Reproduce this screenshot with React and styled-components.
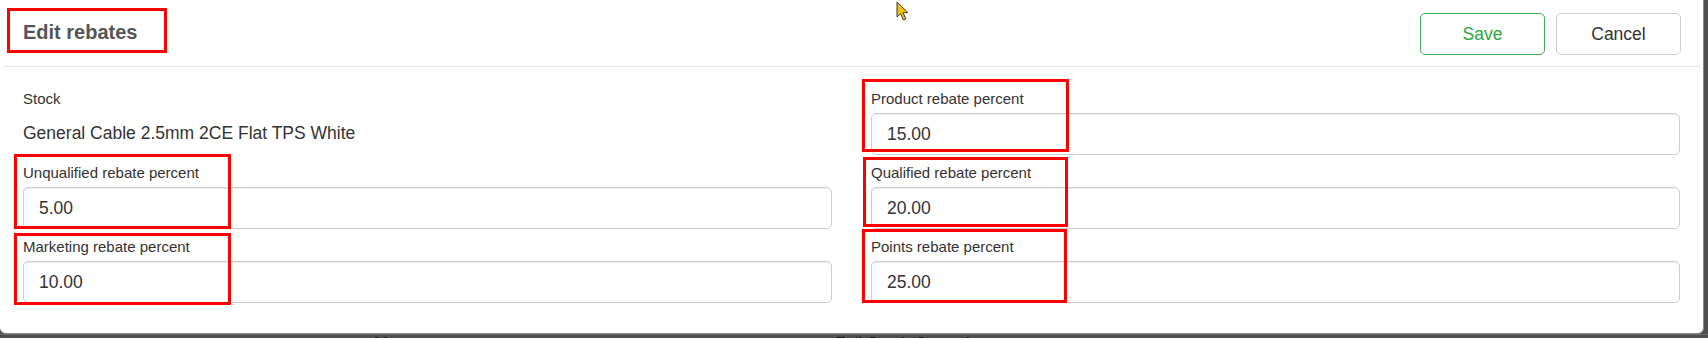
import React from "react";
import styled, { createGlobalStyle } from "styled-components";

const Global = createGlobalStyle`
  html, body {
    margin: 0;
    padding: 0;
    width: 1708px;
    height: 338px;
    overflow: hidden;
    background: #4f4f4f;
    font-family: "Liberation Sans", Arial, Helvetica, sans-serif;
  }
  * { box-sizing: border-box; }
`;

const Page = styled.div`
  position: relative;
  width: 1708px;
  height: 338px;
`;

const Modal = styled.div`
  position: relative;
  width: 1704px;
  height: 334px;
  background: #fff;
  border-right: 1px solid #8a8a8a;
  border-bottom: 1px solid #8a8a8a;
  border-radius: 0 0 6px 6px;
`;

const Header = styled.div`
  display: flex;
  justify-content: space-between;
  align-items: flex-start;
  height: 66px;
  padding: 13px 22px 0 23px;
`;

const Title = styled.h4`
  margin: 8px 0 0 0;
  font-size: 20px;
  line-height: 22px;
  font-weight: 700;
  color: #555;
`;

const Actions = styled.div`
  display: flex;
  gap: 11px;
`;

const Button = styled.button`
  min-width: 125px;
  height: 42px;
  padding: 0 15px;
  font-family: inherit;
  font-size: 17.5px;
  background: #fff;
  border-radius: 5px;
  cursor: pointer;
  color: ${(p) => (p.$variant === "success" ? "#2aa841" : "#333")};
  border: 1px solid ${(p) => (p.$variant === "success" ? "#3fae54" : "#cfcfcf")};
`;

const Divider = styled.hr`
  margin: 0 3px;
  border: 0;
  border-top: 1px solid #e5e5e5;
`;

const Body = styled.div`
  display: grid;
  grid-template-columns: 809px 809px;
  column-gap: 39px;
  row-gap: 7px;
  padding: 21px 24px 0 23px;
`;

const Field = styled.div`
  display: flex;
  flex-direction: column;
`;

const Label = styled.label`
  font-size: 15px;
  line-height: 21px;
  color: #333;
  margin-bottom: 4px;
`;

const StaticValue = styled.div`
  margin-top: 8px;
  font-size: 17.5px;
  line-height: 25px;
  color: #333;
`;

const Input = styled.input`
  width: 100%;
  height: 42px;
  padding: 0 15px;
  font-family: inherit;
  font-size: 17.5px;
  color: #333;
  background: #fff;
  border: 1px solid #cccccc;
  border-radius: 5px;
  box-shadow: inset 0 1px 1px rgba(0, 0, 0, 0.075);
  outline: none;
`;

const Mark = styled.div`
  position: absolute;
  left: ${(p) => p.$x}px;
  top: ${(p) => p.$y}px;
  width: ${(p) => p.$w}px;
  height: ${(p) => p.$h}px;
  border: 3px solid #ff0000;
  pointer-events: none;
`;

const Cursor = styled.svg`
  position: absolute;
  left: 896px;
  top: 1px;
`;

const Backdrop = styled.div`
  display: grid;
  grid-template-columns: 374px 461px 1fr;
  height: 4px;
  overflow: hidden;
  border-top: 1px solid #6a6a6a;
`;

const BackdropCell = styled.div`
  font-size: 17px;
  line-height: 20px;
  margin-top: -1px;
  color: #111;
  white-space: nowrap;
`;

const marks = [
  { x: 7, y: 8, w: 160, h: 45 },
  { x: 14, y: 154, w: 217, h: 75 },
  { x: 14, y: 233, w: 217, h: 72 },
  { x: 862, y: 79, w: 207, h: 73 },
  { x: 863, y: 157, w: 205, h: 70 },
  { x: 862, y: 229, w: 205, h: 74 },
];

const fields = [
  { left: { label: "Stock", text: "General Cable 2.5mm 2CE Flat TPS White" }, right: { label: "Product rebate percent", value: "15.00" } },
  { left: { label: "Unqualified rebate percent", value: "5.00" }, right: { label: "Qualified rebate percent", value: "20.00" } },
  { left: { label: "Marketing rebate percent", value: "10.00" }, right: { label: "Points rebate percent", value: "25.00" } },
];

function FieldBlock({ f }) {
  return (
    <Field>
      <Label>{f.label}</Label>
      {f.text ? <StaticValue>{f.text}</StaticValue> : <Input defaultValue={f.value} readOnly />}
    </Field>
  );
}

export default function App() {
  return (
    <Page>
      <Global />
      <Modal>
        <Header>
          <Title>Edit rebates</Title>
          <Actions>
            <Button $variant="success">Save</Button>
            <Button>Cancel</Button>
          </Actions>
        </Header>
        <Divider />
        <Body>
          {fields.map((row, i) => (
            <React.Fragment key={i}>
              <FieldBlock f={row.left} />
              <FieldBlock f={row.right} />
            </React.Fragment>
          ))}
        </Body>
        {marks.map((m, i) => (
          <Mark key={i} $x={m.x} $y={m.y} $w={m.w} $h={m.h} />
        ))}
        <Cursor width="14" height="21" viewBox="0 0 14 21">
          <path d="M1 1 L1 16 L4.6 12.6 L7.4 19 L9.8 18 L7.1 11.7 L12 11.7 Z" fill="#f6c00c" stroke="#3a3a3a" strokeWidth="1" strokeLinejoin="round" />
        </Cursor>
      </Modal>
      <Backdrop>
        <div />
        <BackdropCell>Mtr</BackdropCell>
        <BackdropCell>Full Stock Control</BackdropCell>
      </Backdrop>
    </Page>
  );
}
